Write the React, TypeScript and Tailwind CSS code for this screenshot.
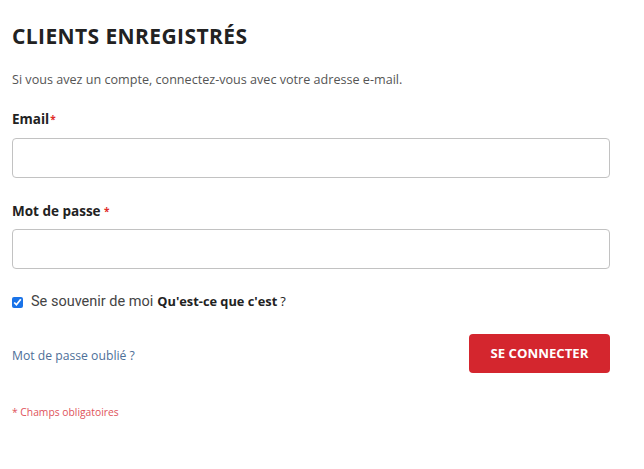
export default function App() {
  return (
    <div className="w-[644px] h-[469px] bg-white px-3 pt-[24px] text-[#333]" style={{ fontFamily: "'Open Sans', 'Liberation Sans', sans-serif" }}>
      <div className="w-[598px]">
        <h1 className="text-[21px] leading-[24px] font-bold tracking-[0.4px] text-[#222]">CLIENTS ENREGISTRÉS</h1>
        <p className="mt-[24px] text-[12.6px] leading-[16px] text-[#555]">Si vous avez un compte, connectez-vous avec votre adresse e-mail.</p>
        <label className="block mt-[22px] text-[13.5px] leading-[18px] font-bold text-[#222]">
          Email<span className="text-[#e02b27] text-[10px] align-top ml-[1px]">*</span>
        </label>
        <input className="mt-[10px] block w-full h-[40px] border border-[#c2c2c2] rounded-[4px] outline-none" />
        <label className="block mt-[24px] text-[13.5px] leading-[18px] font-bold text-[#222]">
          Mot de passe <span className="text-[#e02b27] text-[10px] align-top">*</span>
        </label>
        <input type="password" className="mt-[9px] block w-full h-[40px] border border-[#c2c2c2] rounded-[4px] outline-none" />
        <div className="mt-[24px] flex items-center h-[18px]">
          <input type="checkbox" defaultChecked className="w-[11px] h-[11px] m-0 accent-[#1a73e8]" />
          <span className="ml-[8px] text-[14.5px] text-[#444]" style={{ fontFamily: "Roboto, sans-serif" }}>Se souvenir de moi</span>
          <span className="ml-[4px] text-[12.8px] font-bold text-[#222]">Qu'est-ce que c'est</span>
          <span className="ml-[3px] text-[12.8px] text-[#222]">?</span>
        </div>
        <div className="mt-[23px] flex items-center justify-between">
          <a className="pt-[5px] text-[12.2px] text-[#4e6f98]">Mot de passe oublié ?</a>
          <button className="w-[141px] h-[39px] rounded-[4px] bg-[#d4262e] text-white text-[13.2px] font-bold">SE CONNECTER</button>
        </div>
        <p className="mt-[32px] text-[10.3px] text-[#e0525a]">* Champs obligatoires</p>
      </div>
    </div>
  );
}
